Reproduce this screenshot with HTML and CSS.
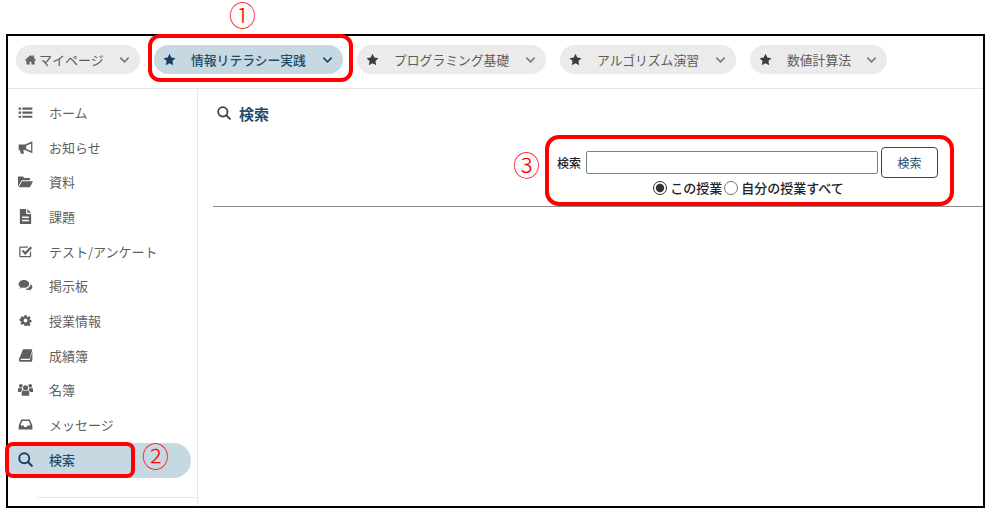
FILE: index.html

```html
<!DOCTYPE html>
<html lang="ja">
<head>
  <meta charset="UTF-8">
  <meta name="viewport" content="width=device-width, initial-scale=1.0">
  <title>検索</title>
  <link rel="stylesheet" href="styles.css">
</head>
<body>
  <svg class="icon-defs" width="0" height="0">
    <symbol id="i-home" viewBox="0 0 24 24"><path d="M12 2 0 13l1.500 1.800L3 13.500V23h7v-6h4v6h7v-9.500l1.500 1.300L24 13l-4-3.600V3h-4v3z"/></symbol>
    <symbol id="i-star" viewBox="0 0 24 24"><path d="m12 1.500 3.300 7 7.700 1-5.600 5.300 1.400 7.700-6.800-3.700-6.800 3.700 1.400-7.700L1 9.500l7.700-1z"/></symbol>
    <symbol id="i-chevron" viewBox="0 0 24 24"><path d="M3 8l9 9 9-9" fill="none" stroke="currentColor" stroke-width="3.400"/></symbol>
    <symbol id="i-list" viewBox="0 0 24 24"><path d="M1 4h4v3.500H1zM7 4h16v3.500H7zM1 10.500h4V14H1zM7 10.500h16V14H7zM1 17h4v3.500H1zM7 17h16v3.500H7z"/></symbol>
    <symbol id="i-bullhorn" viewBox="0 0 24 24"><path d="M23 2 11 7H1v9h2l1.500 6h5L8.500 16H11l12 5zM21 5.500v12l-8-3.500V9z" fill-rule="evenodd"/></symbol>
    <symbol id="i-folder" viewBox="0 0 24 24"><path d="M0 20V4h8l2 2.500h9V10H6zM1 21 6.500 11.500H24L19 21z"/></symbol>
    <symbol id="i-file" viewBox="0 0 24 24"><path d="M3 0h10v8h8v16H3zM15 0l6 6h-6zM6.500 12h11v2.500h-11zM6.500 17h11v2.500h-11z" fill-rule="evenodd"/></symbol>
    <symbol id="i-check" viewBox="0 0 24 24"><path d="M19 13v6H4V6h11l2-2H4a2 2 0 0 0-2 2v13a2 2 0 0 0 2 2h15a2 2 0 0 0 2-2v-8z"/><path d="m6 11 2-2 3.500 3.500L20 4l2.500 2.500L11.500 17.500z"/></symbol>
    <symbol id="i-comments" viewBox="0 0 24 24"><path d="M9.500 3C4.800 3 1 5.900 1 9.500c0 2 1.200 3.800 3 5-.3 1-.9 1.900-1.600 2.700 1.600-.2 3-.9 4.200-1.900 1 .3 1.900.4 2.900.4 4.700 0 8.500-2.900 8.500-6.200S14.200 3 9.500 3z"/><path d="M20 10c.1 3.700-3.500 7-8.500 7.500 1.200 1 2.900 1.500 4.500 1.500.7 0 1.300 0 1.900-.2 1 .8 2.100 1.300 3.400 1.500-.6-.6-1-1.300-1.200-2.100C22 17.300 23 15.800 23 14.200c0-1.700-1.200-3.200-3-4.200z"/></symbol>
    <symbol id="i-cog" viewBox="-3 -3 30 30"><path d="M10 1h4l.6 3.300 1.900.8 2.800-1.900 2.800 2.800-1.900 2.800.8 1.900 3 .6v4l-3 .6-.8 1.900 1.900 2.800-2.800 2.800-2.800-1.900-1.900.8L14 23h-4l-.6-3.300-1.900-.8-2.800 1.900-2.800-2.800 1.900-2.800-.8-1.900-3-.6v-4l3-.6.8-1.900L1.900 6l2.800-2.800 2.800 1.900 1.900-.8zM12 8.200a3.800 3.800 0 1 0 0 7.600 3.800 3.800 0 0 0 0-7.600z" fill-rule="evenodd"/></symbol>
    <symbol id="i-book" viewBox="0 0 24 24"><path d="M8 2h15l-4 15H5.500c-1.200 0-1.500 1-1 1.600.3.400.8.400 1.300.4H19l4-13v13l-1 3H4c-2 0-3-2-2.500-4z"/></symbol>
    <symbol id="i-users" viewBox="0 0 24 24"><circle cx="12" cy="9" r="4"/><circle cx="4.500" cy="6" r="3"/><circle cx="19.500" cy="6" r="3"/><path d="M6 22v-4.500c0-2.500 1.500-4 3-4.300 1.800 1.200 4.200 1.200 6 0 1.500.3 3 1.800 3 4.300V22z"/><path d="M0 16v-4.500C0 10 1 9.500 2.500 9.500c1 .7 2.500.8 3.500.3-.1 1.300.5 2.200 1.300 3C5.800 13.500 4.800 15 4.800 16zM24 16v-4.500c0-1.500-1-2-2.500-2-1 .7-2.500.8-3.500.3.100 1.300-.5 2.200-1.300 3 1.500.7 2.500 2.200 2.500 3.200z"/></symbol>
    <symbol id="i-inbox" viewBox="0 0 24 24"><path d="M5 4h14l4 10v6H1v-6zM6.600 6.500 4 13.500h5l1 2.500h4l1-2.500h5l-2.600-7z" fill-rule="evenodd"/></symbol>
    <symbol id="i-search" viewBox="0 0 24 24"><circle cx="10" cy="10" r="8" fill="none" stroke="currentColor" stroke-width="3"/><path d="m16 16 6 6" stroke="currentColor" stroke-width="3.400" stroke-linecap="round"/></symbol>
  </svg>

  <div class="frame">
    <header class="topbar">
      <a class="course course-home"><svg class="tab-icon home-icon"><use href="#i-home"/></svg><span class="course-name">マイページ</span><svg class="tab-arrow"><use href="#i-chevron"/></svg></a>
      <a class="course course-current"><svg class="tab-icon"><use href="#i-star"/></svg><span class="course-name">情報リテラシー実践</span><svg class="tab-arrow"><use href="#i-chevron"/></svg></a>
      <a class="course course-w1"><svg class="tab-icon"><use href="#i-star"/></svg><span class="course-name">プログラミング基礎</span><svg class="tab-arrow"><use href="#i-chevron"/></svg></a>
      <a class="course course-w2"><svg class="tab-icon"><use href="#i-star"/></svg><span class="course-name">アルゴリズム演習</span><svg class="tab-arrow"><use href="#i-chevron"/></svg></a>
      <a class="course course-w3"><svg class="tab-icon"><use href="#i-star"/></svg><span class="course-name">数値計算法</span><svg class="tab-arrow"><use href="#i-chevron"/></svg></a>
    </header>

    <div class="content">
      <nav class="sidebar">
        <a class="nav-item"><svg class="nav-icon"><use href="#i-list"/></svg>ホーム</a>
        <a class="nav-item"><svg class="nav-icon"><use href="#i-bullhorn"/></svg>お知らせ</a>
        <a class="nav-item"><svg class="nav-icon"><use href="#i-folder"/></svg>資料</a>
        <a class="nav-item"><svg class="nav-icon"><use href="#i-file"/></svg>課題</a>
        <a class="nav-item"><svg class="nav-icon"><use href="#i-check"/></svg>テスト/アンケート</a>
        <a class="nav-item"><svg class="nav-icon"><use href="#i-comments"/></svg>掲示板</a>
        <a class="nav-item"><svg class="nav-icon"><use href="#i-cog"/></svg>授業情報</a>
        <a class="nav-item"><svg class="nav-icon"><use href="#i-book"/></svg>成績簿</a>
        <a class="nav-item"><svg class="nav-icon"><use href="#i-users"/></svg>名簿</a>
        <a class="nav-item"><svg class="nav-icon"><use href="#i-inbox"/></svg>メッセージ</a>
        <a class="nav-item nav-active"><svg class="nav-icon"><use href="#i-search"/></svg>検索</a>
        <div class="sidebar-foot"></div>
      </nav>

      <main class="main">
        <h1 class="page-title"><svg class="title-icon"><use href="#i-search"/></svg>検索</h1>
        <form class="search-form">
          <div class="search-row">
            <label class="search-label" for="q">検索</label>
            <input class="search-input" id="q" type="text">
            <button class="search-btn" type="button">検索</button>
          </div>
          <div class="scope-row">
            <input type="radio" name="scope" checked><span>この授業</span>
            <input type="radio" name="scope"><span>自分の授業すべて</span>
          </div>
        </form>
        <hr class="divider">
      </main>
    </div>
  </div>

  <!-- annotations drawn over the screenshot -->
  <div class="mark mark-1"></div>
  <div class="mark mark-2"></div>
  <div class="mark mark-3"></div>
  <span class="num num-1">①</span>
  <span class="num num-2">②</span>
  <span class="num num-3">③</span>
</body>
</html>
```

FILE: styles.css

```css
html, body {
  height: 513px;
  margin: 0;
  overflow: hidden;
  background-color: #fff;
}

body {
  position: relative;
  padding: 34px 6px 5px 6px;
  box-sizing: border-box;
  font-family: "Noto Sans CJK JP", "Noto Sans", sans-serif;
  color: #555;
}

.icon-defs {
  position: absolute;
}

.frame {
  display: flex;
  flex-direction: column;
  height: 100%;
  box-sizing: border-box;
  border: 2px solid #000;
}

/* course tabs */
.topbar {
  display: flex;
  align-items: center;
  gap: 14px;
  height: 53px;
  padding: 0 8px 6px 8px;
  box-sizing: border-box;
  border-bottom: 1px solid #e4e4e4;
}

.course {
  display: flex;
  align-items: center;
  width: 189px;
  height: 29px;
  padding: 0 10px 0 9px;
  box-sizing: border-box;
  border-radius: 15px;
  background-color: #ebebeb;
  font-size: 12.800px;
  color: #5c5c5c;
}

.course-home { width: 124px; font-size: 13px; }
.course-current { background-color: #c6d8e2; color: #1d4d6b; font-weight: 500; }
.course-w1 { width: 189px; }
.course-w2 { width: 176px; }
.course-w3 { width: 137px; }

.tab-icon {
  width: 13px;
  height: 13px;
  flex: none;
  fill: #3c3c3c;
}

.home-icon {
  width: 11px;
  height: 11px;
  fill: #666;
}

.course-current .tab-icon { fill: #17405c; }

.course-name {
  flex: 1;
  margin-left: 15px;
  white-space: nowrap;
}

.course-home .course-name { margin-left: 3px; }

.tab-arrow {
  width: 11px;
  height: 11px;
  flex: none;
  color: #777;
}

.course-current .tab-arrow { color: #17405c; }

/* sidebar + main */
.content {
  display: flex;
  flex: 1;
  min-height: 0;
}

.sidebar {
  width: 190px;
  flex: none;
  padding: 7px 6px 0 0;
  box-sizing: border-box;
  border-right: 1px solid #e8e8e8;
}

.nav-item {
  display: flex;
  align-items: center;
  height: 34.700px;
  padding: 0 0 2px 10px;
  box-sizing: border-box;
  font-size: 13px;
  color: #5f5f5f;
}

.nav-icon {
  width: 15px;
  height: 15px;
  flex: none;
  margin-right: 16px;
  fill: #5f5f5f;
  color: #5f5f5f;
}

.nav-active {
  height: 35px;
  border-radius: 6px 18px 18px 6px;
  background-color: #c6d8e2;
  color: #1d4d6b;
  font-weight: 500;
}

.nav-active .nav-icon { fill: #17405c; color: #17405c; }

.sidebar-foot {
  margin: 19px -6px 0 29px;
  border-top: 1px solid #e8e8e8;
}

.main {
  flex: 1;
  min-width: 0;
  padding: 14px 0 0 15px;
}

.page-title {
  display: flex;
  align-items: center;
  gap: 8px;
  height: 20px;
  margin: 0 0 24px 4px;
  font-size: 15px;
  font-weight: 700;
  color: #1d4d6b;
}

.title-icon {
  width: 14px;
  height: 14px;
  color: #2c4354;
}

/* search form */
.search-form {
  display: flex;
  flex-direction: column;
  align-items: center;
  width: 381px;
  margin-left: auto;
  margin-right: 44px;
  font-size: 12px;
  font-weight: 500;
  color: #222;
}

.search-row {
  display: flex;
  align-items: center;
  gap: 3px;
  width: 100%;
}

.search-label { width: 25px; margin-left: -1px; margin-right: 1px; }

.search-input {
  width: 292px;
  height: 23px;
  padding: 0;
  box-sizing: border-box;
  border: 1px solid #808080;
  border-radius: 2px;
}

.search-btn {
  width: 57px;
  height: 31px;
  padding: 0;
  border: 1px solid #1d4d6b;
  border-radius: 4px;
  background-color: #fff;
  font-family: inherit;
  font-size: 12px;
  color: #1d4d6b;
}

.scope-row {
  display: flex;
  align-items: center;
  margin: 1px 2px 0 0;
  font-size: 13px;
  line-height: 18px;
}

.scope-row input {
  width: 14px;
  height: 14px;
  margin: 0 3px 0 2px;
  accent-color: #333;
}

.divider {
  height: 1px;
  margin: 9px 0 0 0;
  border: 0;
  background-color: #8a8a8a;
}

/* red annotations */
.mark {
  position: absolute;
  box-sizing: border-box;
  border: 4px solid #f00;
  border-radius: 12px;
}

.mark-1 { left: 148px; top: 34px; width: 205px; height: 48px; }
.mark-2 { left: 5px; top: 442px; width: 130px; height: 36px; border-radius: 8px; }
.mark-3 { left: 545px; top: 135px; width: 409px; height: 71px; border-radius: 14px; }

/* vertical mode keeps the tall CJK line box from running off the top edge */
.num {
  position: absolute;
  writing-mode: vertical-rl;
  font-size: 27px;
  line-height: 27px;
  font-weight: 300;
  color: #f00;
}

.num-1 { left: 229px; top: 2px; }
.num-2 { left: 142px; top: 443px; }
.num-3 { left: 513px; top: 152px; }
```
